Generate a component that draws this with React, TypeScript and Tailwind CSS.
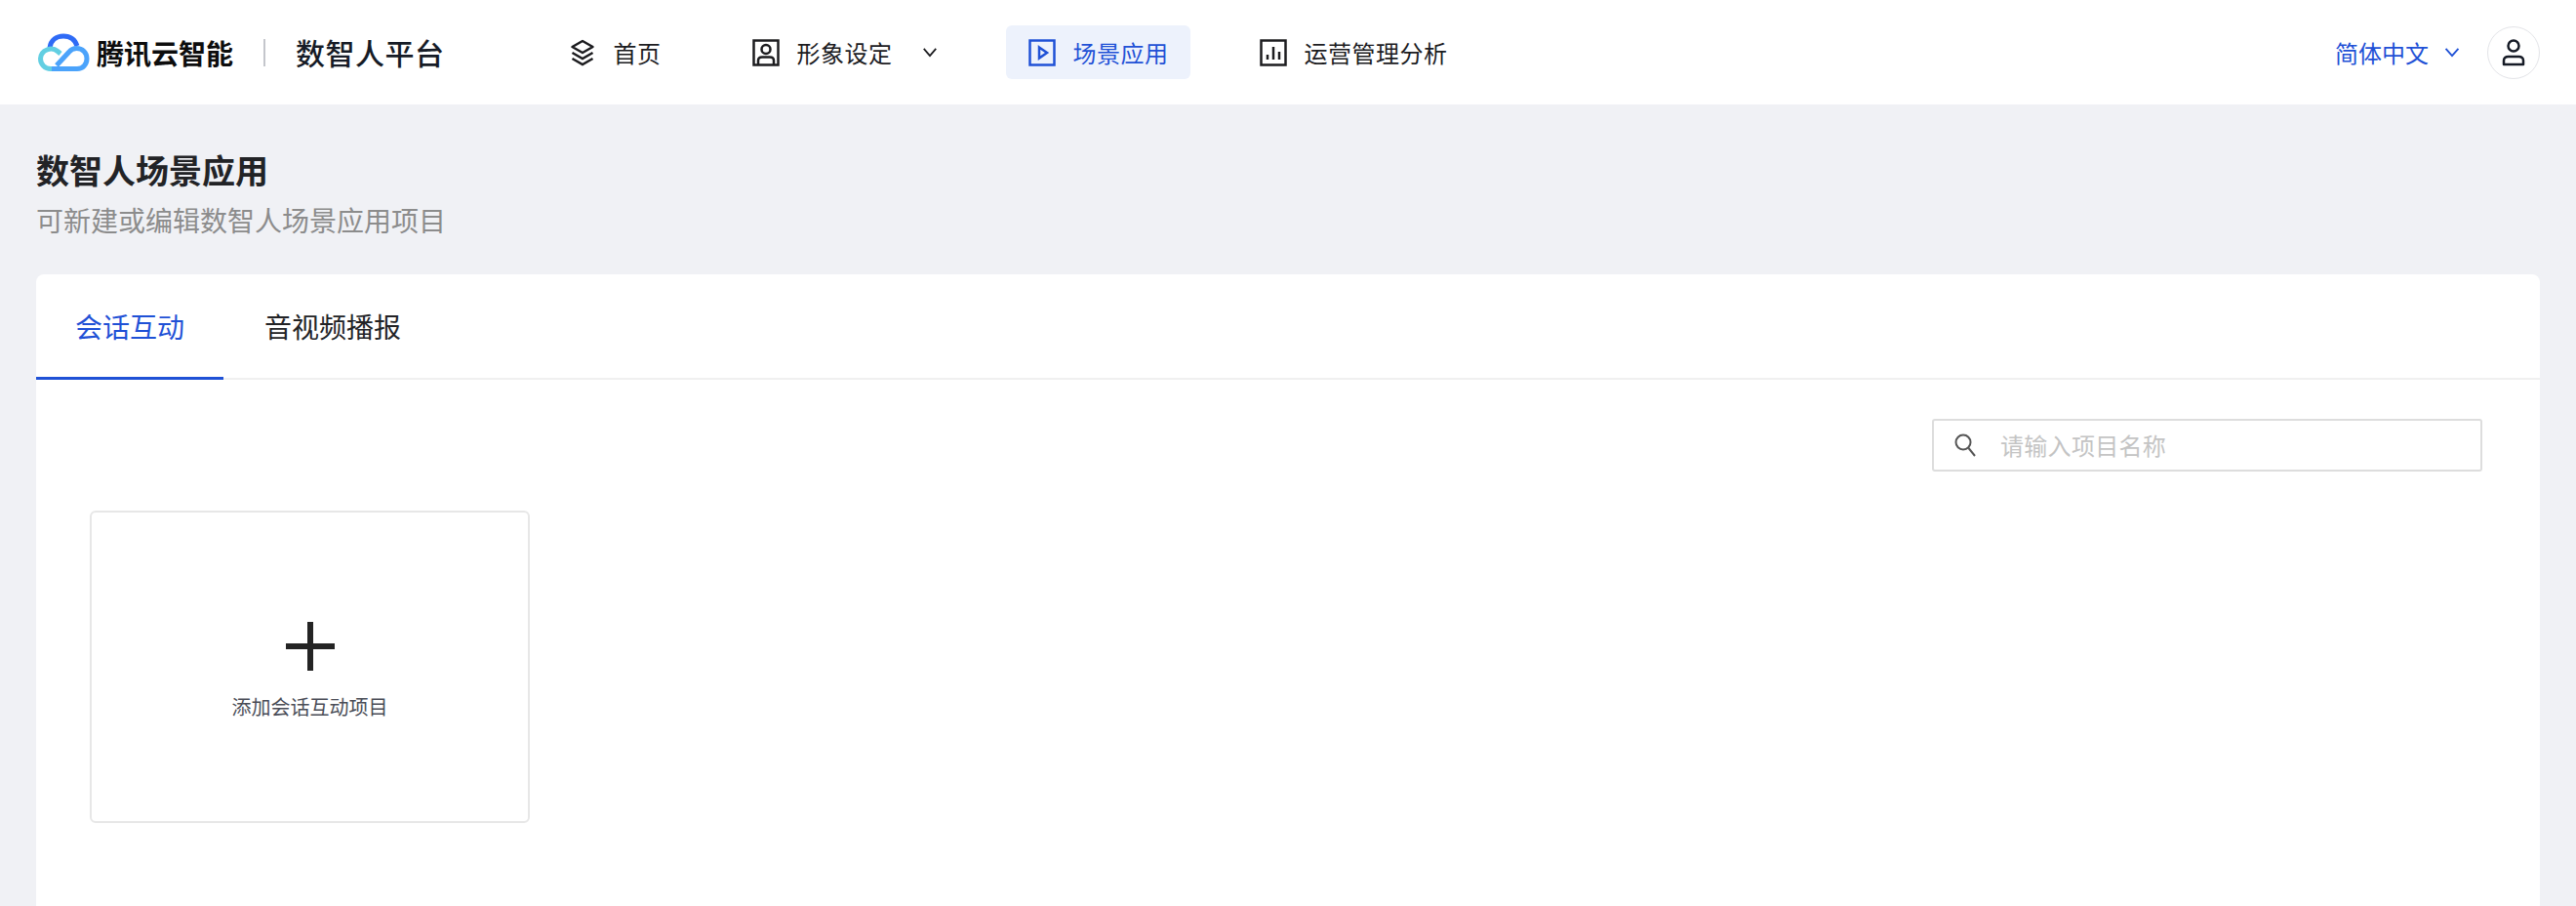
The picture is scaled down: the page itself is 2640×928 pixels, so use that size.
import type { ReactNode } from 'react';

const cjk = 'font-["Noto_Sans_CJK_SC","Noto_Sans",sans-serif]';

function Logo() {
  return (
    <svg width="54" height="40" viewBox="0 0 54 40" fill="none" className="shrink-0">
      <path d="M13 15C14 7 20 3 27 3C34 3 39 7 41 13" stroke="#2f6bf6" strokeWidth="5" />
      <path d="M24 21L21 18.500C15 13.500 4 17 3.500 26C3.500 32 8 36.500 14 36.500H27" stroke="#62cfe2" strokeWidth="5" />
      <path d="M15 36.500H41C47 36.500 51 32 51 26C51 20 46.500 15.500 40.500 15.500C37 15.500 34.500 17 32.500 19.500L20 33" stroke="#4ba3fb" strokeWidth="5" />
    </svg>
  );
}

function NavIcon({ name }: { name: 'layers' | 'portrait' | 'play' | 'chart' }) {
  if (name === 'layers') {
    return (
      <svg width="30" height="30" viewBox="0 0 30 30" fill="none" stroke="currentColor" strokeWidth="2.500">
        <path d="M15 3L25.500 9L15 15L4.500 9Z" strokeLinejoin="round" />
        <path d="M4.500 15L15 21L25.500 15" />
        <path d="M4.500 21L15 27L25.500 21" />
      </svg>
    );
  }
  if (name === 'portrait') {
    return (
      <svg width="30" height="30" viewBox="0 0 30 30" fill="none" stroke="currentColor" strokeWidth="2.500">
        <rect x="2.500" y="2.500" width="25" height="25" />
        <circle cx="15" cy="11.500" r="4.500" />
        <path d="M7 27V23C7 20.500 9 19.500 11 19.500H19C21 19.500 23 20.500 23 23V27" />
      </svg>
    );
  }
  if (name === 'play') {
    return (
      <svg width="30" height="30" viewBox="0 0 30 30" fill="none" stroke="currentColor" strokeWidth="2.500">
        <rect x="2.500" y="2.500" width="25" height="25" />
        <path d="M12 9.500L20 15L12 20.500Z" />
      </svg>
    );
  }
  return (
    <svg width="30" height="30" viewBox="0 0 30 30" fill="none" stroke="currentColor" strokeWidth="2.500">
      <rect x="2.500" y="2.500" width="25" height="25" />
      <path d="M9 22V17M15 22V9M21 22V14" />
    </svg>
  );
}

function Chevron({ className }: { className: string }) {
  return (
    <svg viewBox="0 0 18 12" fill="none" stroke="currentColor" strokeWidth="2" className={className}>
      <path d="M2 2L9 10L16 2" />
    </svg>
  );
}

function NavItem({ icon, active, children }: { icon: 'layers' | 'portrait' | 'play' | 'chart'; active?: boolean; children: ReactNode }) {
  return (
    <div
      className={`flex h-[55px] items-center gap-[17px] rounded-md px-[22px] text-[24px] tracking-[0.5px] ${
        active ? 'bg-[#edf2fc] text-[#1f51d6]' : 'text-[#1c1c1f]'
      }`}
    >
      <NavIcon name={icon} />
      {children}
    </div>
  );
}

export default function App() {
  return (
    <div className={`flex h-screen flex-col overflow-hidden bg-[#f0f1f5] ${cjk}`}>
      <header className="flex h-[107px] shrink-0 items-center bg-white pr-[37px] pl-[38px]">
        <Logo />
        <span className="ml-[7px] text-[28px] font-bold text-[#0d0d0d]">腾讯云智能</span>
        <span className="mx-[31px] h-[28px] w-[2px] bg-[#c4c6cc]" />
        <span className="text-[30px] font-medium tracking-[0.5px] text-[#161b26]">数智人平台</span>
        <nav className="ml-[104px] flex items-center gap-[48px]">
          <NavItem icon="layers">首页</NavItem>
          <NavItem icon="portrait">
            <span>形象设定</span>
            <Chevron className="ml-[13px] h-[11px] w-[16px]" />
          </NavItem>
          <NavItem icon="play" active>
            场景应用
          </NavItem>
          <NavItem icon="chart">运营管理分析</NavItem>
        </nav>
        <div className="ml-auto flex items-center text-[24px] text-[#1f51d6]">
          <span>简体中文</span>
          <Chevron className="mr-[27px] ml-[15px] h-[11px] w-[18px]" />
        </div>
        <div className="flex h-[54px] w-[54px] items-center justify-center rounded-full border border-[#e3e4e8]">
          <svg width="26" height="30" viewBox="0 0 26 30" fill="none" stroke="#161b26" strokeWidth="2.500">
            <circle cx="13" cy="8" r="5.500" />
            <path d="M3 27V23C3 20.500 5 19 7.500 19H18.500C21 19 23 20.500 23 23V27Z" strokeLinejoin="round" />
          </svg>
        </div>
      </header>

      <main className="flex flex-1 flex-col px-[37px] pt-[43px]">
        <h1 className="text-[34px] leading-[48px] font-semibold text-[#222326]">数智人场景应用</h1>
        <p className="mt-[7px] text-[28px] leading-[40px] text-[#8c8c8c]">可新建或编辑数智人场景应用项目</p>

        <section className="mt-[36px] flex-1 rounded-t-lg bg-white">
          <div className="flex h-[108px] border-b-2 border-[#f0f0f0]">
            <div className="-mb-[2px] flex w-[192px] items-center justify-center border-b-[3px] border-[#1f51d6] text-[28px] text-[#1f51d6]">
              会话互动
            </div>
            <div className="flex items-center pl-[42px] text-[28px] text-[#222326]">音视频播报</div>
          </div>

          <div className="flex justify-end pt-[40px] pr-[59px]">
            <div className="flex h-[54px] w-[564px] items-center rounded-[3px] border-2 border-[#dddddd] pl-[20px]">
              <svg width="24" height="26" viewBox="0 0 24 26" fill="none" stroke="#555555" strokeWidth="2">
                <circle cx="10" cy="10" r="7.500" />
                <path d="M15.500 16L22 24" />
              </svg>
              <span className="ml-[24px] text-[24px] tracking-[0.3px] text-[#c4c4c4]">请输入项目名称</span>
            </div>
          </div>

          <div className="mt-[40px] ml-[55px] flex h-[320px] w-[451px] flex-col items-center rounded-md border-2 border-[#e7e7e7] pt-[112px]">
            <svg width="50" height="50" viewBox="0 0 50 50" fill="#242424">
              <rect x="22" y="0" width="6" height="50" />
              <rect x="0" y="22" width="50" height="6" />
            </svg>
            <span className="mt-[23px] text-[20px] leading-[28px] text-[#4a4d57]">添加会话互动项目</span>
          </div>
        </section>
      </main>
    </div>
  );
}
